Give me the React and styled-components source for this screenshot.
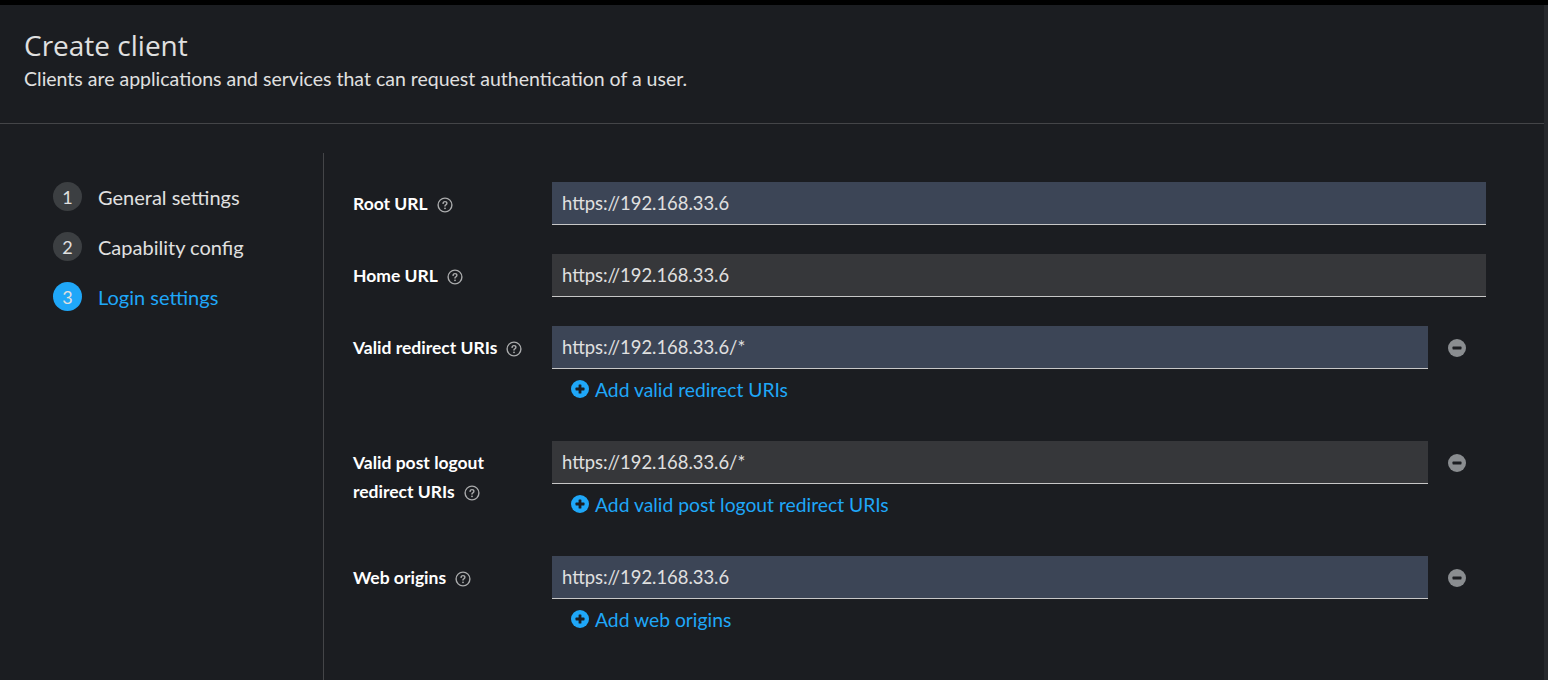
import React from 'react';
import styled, { createGlobalStyle } from 'styled-components';

const palette = {
  bg: '#1b1d21',
  line: '#444548',
  text: '#e0e0e0',
  white: '#ffffff',
  muted: '#aaabac',
  blue: '#1fa7f8',
  stepGray: '#3c3f42',
  inputBlue: '#3c4556',
  inputGray: '#36373a',
  minus: '#8a8d90',
};

const GlobalStyle = createGlobalStyle`
  html, body {
    margin: 0;
    padding: 0;
    background: ${palette.bg};
    overflow: hidden;
  }
  body {
    font-family: Lato, "Liberation Sans", sans-serif;
    color: ${palette.text};
  }
  * {
    box-sizing: border-box;
  }
`;

const TopBar = styled.div`
  height: 5px;
  background: #000;
`;

const Shell = styled.div`
  display: flex;
  height: 675px;
`;

const Page = styled.div`
  flex: 1;
  display: flex;
  flex-direction: column;
`;

const Scrollbar = styled.div`
  width: 4px;
  background: #26282c;
`;

const Header = styled.div`
  padding: 22px 24px 29px;
  border-bottom: 1px solid ${palette.line};
`;

const Title = styled.h1`
  margin: 0;
  font-family: "Open Sans", Lato, sans-serif;
  font-weight: 400;
  font-size: 28px;
  line-height: 36px;
  color: ${palette.text};
`;

const Description = styled.p`
  margin: 1px 0 0;
  font-size: 19.5px;
  line-height: 30px;
  color: ${palette.text};
`;

const Body = styled.div`
  flex: 1;
  display: flex;
  padding-top: 29px;
`;

const Nav = styled.nav`
  width: 324px;
  border-right: 1px solid ${palette.line};
  padding: 29px 0 0 53px;
  display: flex;
  flex-direction: column;
  gap: 21px;
`;

const Step = styled.div`
  display: flex;
  align-items: center;
  gap: 16px;
  height: 29px;
  font-size: 20px;
  color: ${(p) => (p.$active ? palette.blue : palette.text)};
`;

const StepNumber = styled.span`
  width: 29px;
  height: 29px;
  border-radius: 50%;
  display: flex;
  align-items: center;
  justify-content: center;
  font-size: 18px;
  color: ${palette.text};
  background: ${(p) => (p.$active ? palette.blue : palette.stepGray)};
`;

const Form = styled.div`
  flex: 1;
  padding: 29px 58px 0 29px;
  display: flex;
  flex-direction: column;
  gap: 29px;
`;

const Field = styled.div`
  display: flex;
  align-items: flex-start;
  padding-bottom: ${(p) => (p.$multi ? '5px' : '0')};
`;

const Label = styled.div`
  width: 199px;
  padding: 7px 16px 0 0;
  font-size: 17.5px;
  font-weight: 700;
  line-height: 29px;
  color: ${palette.white};
`;

const HelpIcon = styled.svg`
  width: 16px;
  height: 16px;
  vertical-align: -3px;
  margin-left: 9px;
`;

const Control = styled.div`
  flex: 1;
  display: flex;
  flex-direction: column;
`;

const InputRow = styled.div`
  display: flex;
  align-items: center;
`;

const Input = styled.div`
  flex: 1;
  height: 43px;
  display: flex;
  align-items: center;
  padding: 0 10px;
  font-size: 18.4px;
  color: ${palette.text};
  background: ${(p) => (p.$filled ? palette.inputBlue : palette.inputGray)};
  border-bottom: 1px solid #c7c7c7;
`;

const RemoveButton = styled.button`
  width: 58px;
  height: 42px;
  border: 0;
  background: none;
  padding: 0;
  display: flex;
  align-items: center;
  justify-content: center;
`;

const AddButton = styled.button`
  align-self: flex-start;
  margin-top: 2px;
  height: 36px;
  display: flex;
  align-items: center;
  gap: 6px;
  padding: 0 0 0 19px;
  border: 0;
  background: none;
  font-family: inherit;
  font-size: 19.3px;
  color: ${palette.blue};
`;

function Help() {
  return (
    <HelpIcon viewBox="0 0 16 16">
      <circle cx="8" cy="8" r="6.9" fill="none" stroke={palette.muted} strokeWidth="1.4" />
      <path
        d="M6.1 6.4c0-1.1.8-1.8 1.9-1.8s1.9.7 1.9 1.6c0 .8-.5 1.2-1.1 1.6-.5.3-.8.6-.8 1.3"
        fill="none"
        stroke={palette.muted}
        strokeWidth="1.4"
        strokeLinecap="round"
      />
      <circle cx="8" cy="11.3" r="0.9" fill={palette.muted} />
    </HelpIcon>
  );
}

function MinusCircle() {
  return (
    <svg width="18" height="18" viewBox="0 0 18 18">
      <circle cx="9" cy="9" r="9" fill={palette.minus} />
      <rect x="4.5" y="7.6" width="9" height="2.8" rx="0.6" fill={palette.bg} />
    </svg>
  );
}

function PlusCircle() {
  return (
    <svg width="18" height="18" viewBox="0 0 18 18">
      <circle cx="9" cy="9" r="9" fill={palette.blue} />
      <rect x="4.5" y="7.6" width="9" height="2.8" rx="0.6" fill={palette.bg} />
      <rect x="7.6" y="4.5" width="2.8" height="9" rx="0.6" fill={palette.bg} />
    </svg>
  );
}

const steps = ['General settings', 'Capability config', 'Login settings'];

const fields = [
  { label: 'Root URL', value: 'https://192.168.33.6', filled: true },
  { label: 'Home URL', value: 'https://192.168.33.6' },
  {
    label: 'Valid redirect URIs',
    value: 'https://192.168.33.6/*',
    filled: true,
    add: 'Add valid redirect URIs',
  },
  {
    label: (
      <>
        Valid post logout
        <br />
        redirect URIs
      </>
    ),
    value: 'https://192.168.33.6/*',
    add: 'Add valid post logout redirect URIs',
  },
  {
    label: 'Web origins',
    value: 'https://192.168.33.6',
    filled: true,
    add: 'Add web origins',
  },
];

export default function App() {
  return (
    <>
      <GlobalStyle />
      <TopBar />
      <Shell>
        <Page>
          <Header>
            <Title>Create client</Title>
            <Description>
              Clients are applications and services that can request authentication of a user.
            </Description>
          </Header>
          <Body>
            <Nav>
              {steps.map((s, i) => (
                <Step key={s} $active={i === 2}>
                  <StepNumber $active={i === 2}>{i + 1}</StepNumber>
                  {s}
                </Step>
              ))}
            </Nav>
            <Form>
              {fields.map((f, i) => (
                <Field key={i} $multi={!!f.add}>
                  <Label>
                    {f.label}
                    <Help />
                  </Label>
                  <Control>
                    <InputRow>
                      <Input $filled={f.filled}>{f.value}</Input>
                      {f.add && (
                        <RemoveButton>
                          <MinusCircle />
                        </RemoveButton>
                      )}
                    </InputRow>
                    {f.add && (
                      <AddButton>
                        <PlusCircle />
                        {f.add}
                      </AddButton>
                    )}
                  </Control>
                </Field>
              ))}
            </Form>
          </Body>
        </Page>
        <Scrollbar />
      </Shell>
    </>
  );
}
